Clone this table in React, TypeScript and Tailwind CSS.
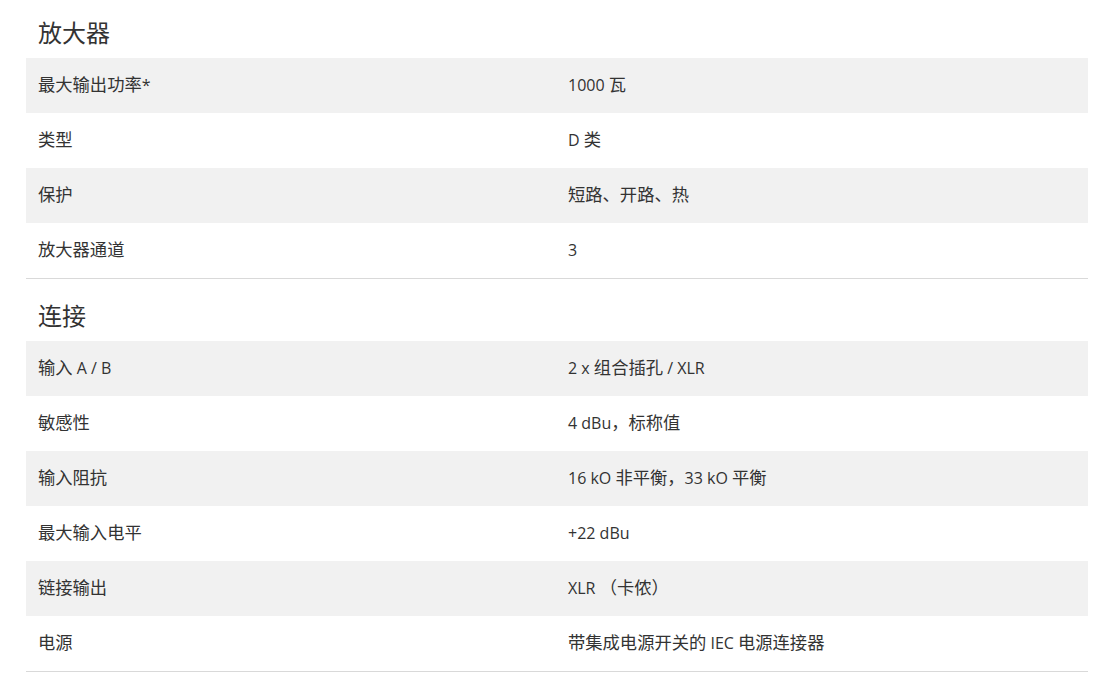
const sections: { title: string; rows: [string, string][] }[] = [
  {
    title: "放大器",
    rows: [
      ["最大输出功率*", "1000 瓦"],
      ["类型", "D 类"],
      ["保护", "短路、开路、热"],
      ["放大器通道", "3"],
    ],
  },
  {
    title: "连接",
    rows: [
      ["输入 A / B", "2 x 组合插孔 / XLR"],
      ["敏感性", "4 dBu，标称值"],
      ["输入阻抗", "16 kO 非平衡，33 kO 平衡"],
      ["最大输入电平", "+22 dBu"],
      ["链接输出", "XLR （卡侬）"],
      ["电源", "带集成电源开关的 IEC 电源连接器"],
    ],
  },
];

// CJK glyphs render a touch larger than the latin text in the original
function Mixed({ text }: { text: string }) {
  const parts = text.split(/([\u3000-\u9fff\uff00-\uffef]+)/).filter(Boolean);
  return (
    <>
      {parts.map((p, i) =>
        /[\u3000-\u9fff\uff00-\uffef]/.test(p) ? (
          <span key={i} className="text-[17.3px]">
            {p}
          </span>
        ) : (
          <span key={i}>{p}</span>
        )
      )}
    </>
  );
}

export default function App() {
  return (
    <div
      className="min-h-screen bg-white text-[#333333] px-[26px] pr-[13px]"
      style={{ fontFamily: '"Open Sans", "Noto Sans CJK SC", sans-serif' }}
    >
      {sections.map((s, si) => (
        <section key={s.title} className="border-b border-[#d9d9d9]">
          <h2
            className={`px-3 pb-[9px] mb-px text-[24px] leading-[30px] ${
              si === 0 ? "pt-[18px]" : "pt-[22px]"
            }`}
          >
            {s.title}
          </h2>
          <div>
            {s.rows.map(([k, v], i) => (
              <div
                key={k}
                className={`grid grid-cols-2 h-[55px] items-center pb-[2px] text-[16px] leading-6 ${
                  i % 2 === 0 ? "bg-[#f1f1f1]" : "bg-white"
                }`}
              >
                <div className="px-3">
                  <Mixed text={k} />
                </div>
                <div className="pl-[11px] pr-3">
                  <Mixed text={v} />
                </div>
              </div>
            ))}
          </div>
        </section>
      ))}
    </div>
  );
}
